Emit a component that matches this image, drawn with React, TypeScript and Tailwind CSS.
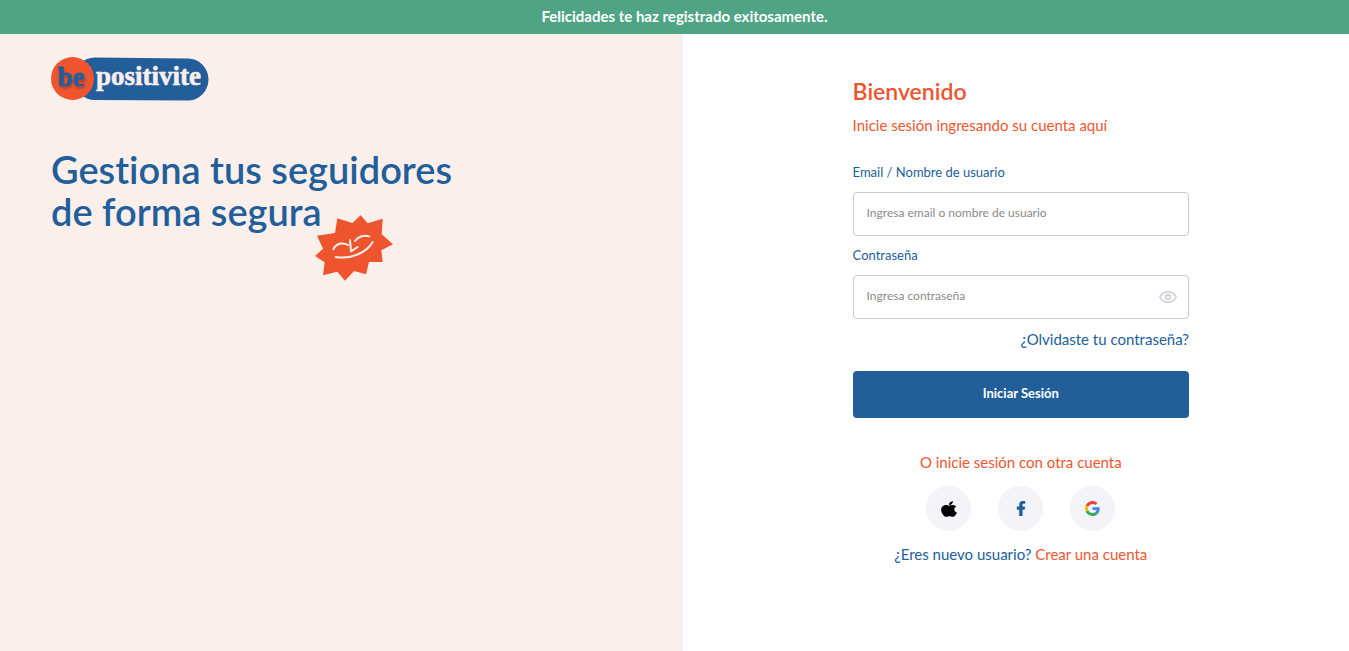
import { useState } from "react";
import type { ReactNode } from "react";

function Logo() {
  return (
    <svg className="block h-11 w-40" viewBox="0 0 160 44" role="img" aria-label="be positivite">
      <defs>
        <filter id="soft" x="-20%" y="-20%" width="150%" height="160%">
          <feDropShadow dx="0.5" dy="2" stdDeviation="1.2" floodColor="#7a2f2a" floodOpacity="0.6" />
        </filter>
      </defs>
      <path d="M44 0.5 L137 1.5 A20.5 21 0 0 1 137 43.5 L44 43 A21 21 0 0 1 44 0.5Z" fill="#215e9a" />
      <circle cx="21.5" cy="21.5" r="21.5" fill="#ee552f" />
      <text x="7" y="29" fontSize="27" fontWeight="700" fill="#215e9a" stroke="#215e9a" strokeWidth="0.8" filter="url(#soft)" className="font-['Liberation_Serif',serif]">be</text>
      <text x="45" y="28" fontSize="27" fontWeight="700" fill="#fbefeb" stroke="#fbefeb" strokeWidth="0.6" className="font-['Liberation_Serif',serif]">positivite</text>
    </svg>
  );
}

function Star() {
  return (
    <svg className="absolute top-[67px] left-[264px] h-[66px] w-[79px]" viewBox="31 29 237 198" aria-hidden="true">
      <path
        fill="#ee552f"
        d="M37 91 L91 83 L98 39 L143 53 L168 30 L189 54 L234 40 L231 87 L265 117 L230 135 L234 170 L193 170 L184 207 L148 197 L121 226 L98 199 L55 210 L60 171 L31 152 L55 130Z"
      />
      <g fill="none" stroke="#fbefeb" strokeWidth="6" strokeLinecap="round" strokeLinejoin="round">
        <path d="M86 132 C94 114 114 110 130 119" />
        <path d="M151 107 C161 93 180 88 194 93" />
        <path d="M136 105 L139 138 L159 125" />
        <path d="M93 155 C138 163 186 142 204 110" />
      </g>
    </svg>
  );
}

function AppleIcon() {
  return (
    <svg className="h-[18px] w-4" viewBox="0 0 384 512" preserveAspectRatio="none" aria-hidden="true">
      <path d="M318.7 268.7c-.2-36.7 16.4-64.4 50-84.8-18.8-26.9-47.2-41.7-84.7-44.6-35.5-2.8-74.3 20.7-88.5 20.7-15 0-49.4-19.7-76.4-19.7C63.3 141.2 4 184.8 4 273.5q0 39.3 14.4 81.2c12.8 36.7 59 126.7 107.2 125.2 25.2-.6 43-17.9 75.8-17.9 31.8 0 48.3 17.9 76.4 17.9 48.6-.7 90.4-82.5 102.6-119.3-65.2-30.7-61.7-90-61.7-91.9zm-56.6-164.2c27.3-32.4 24.8-61.9 24-72.5-24.1 1.4-52 16.4-67.9 34.9-17.5 19.8-27.8 44.3-25.6 71.9 26.1 2 49.9-11.4 69.5-34.3z" />
    </svg>
  );
}

function FacebookIcon() {
  return (
    <svg className="h-[15px] w-4" viewBox="0 0 320 512" fill="#215e9a" stroke="#215e9a" strokeWidth="14" aria-hidden="true">
      <path d="M279.14 288l14.22-92.66h-88.91v-60.13c0-25.35 12.42-50.06 52.24-50.06h40.42V6.26S260.43 0 225.36 0c-73.22 0-121.08 44.38-121.08 124.72v70.62H22.89V288h81.39v224h100.17V288z" />
    </svg>
  );
}

function GoogleIcon() {
  return (
    <svg className="h-[15px] w-[15px]" viewBox="0 0 48 48" aria-hidden="true">
      <path fill="#ea4335" d="M24 9.5c3.54 0 6.71 1.22 9.21 3.6l6.85-6.85C35.9 2.38 30.47 0 24 0 14.62 0 6.51 5.38 2.56 13.22l7.98 6.19C12.43 13.72 17.74 9.5 24 9.5z" />
      <path fill="#4285f4" d="M46.98 24.55c0-1.57-.15-3.09-.38-4.55H24v9.02h12.94c-.58 2.96-2.26 5.48-4.78 7.18l7.73 6c4.51-4.18 7.09-10.36 7.09-17.65z" />
      <path fill="#fbbc05" d="M10.53 28.59c-.48-1.45-.76-2.99-.76-4.59s.27-3.14.76-4.59l-7.98-6.19C.92 16.46 0 20.12 0 24c0 3.88.92 7.54 2.56 10.78l7.97-6.19z" />
      <path fill="#34a853" d="M24 48c6.48 0 11.93-2.13 15.89-5.81l-7.73-6c-2.15 1.45-4.92 2.3-8.16 2.3-6.26 0-11.57-4.22-13.47-9.91l-7.98 6.19C6.51 42.62 14.62 48 24 48z" />
    </svg>
  );
}

function SocialButton({ label, children }: { label: string; children: ReactNode }) {
  return (
    <button type="button" aria-label={label} className="flex size-[45px] items-center justify-center rounded-full bg-[#f3f3f8]">
      {children}
    </button>
  );
}

const inputClass =
  "mt-2 block h-11 w-full rounded border border-[#c8c8da] bg-white px-[13px] pb-1 text-xs text-[#215e9a] placeholder:text-[#8a8a8a] outline-none focus:border-[#215e9a]";

export default function App() {
  const [visible, setVisible] = useState(false);
  return (
    <div className="flex min-h-screen flex-col bg-white font-['Lato',sans-serif] text-[15px] leading-6 text-[#215e9a] [font-variant-ligatures:none]">
      <div role="status" className="bg-[#4ea484] pt-1 pb-1.5 pl-5 text-center font-bold text-white">
        Felicidades te haz registrado exitosamente.
      </div>
      <div className="flex flex-1">
        <section className="w-[50.6%] bg-[#fbefeb] px-[51px] pt-[23px]">
          <Logo />
          <div className="relative mt-[47px]">
            <h1 className="text-[38px] leading-[42px] font-semibold">
              Gestiona tus seguidores
              <br />
              de forma segura
            </h1>
            <Star />
          </div>
        </section>
        <main className="flex-1 pt-[41px] pr-40 pl-[170px]">
          <h2 className="text-[23px] leading-8 font-semibold text-[#ee552f]">Bienvenido</h2>
          <p className="mt-1.5 text-[#ee552f]">Inicie sesión ingresando su cuenta aquí</p>
          <form className="mt-[23px]" onSubmit={(e) => e.preventDefault()}>
            <label htmlFor="user" className="block text-[13px]">
              Email / Nombre de usuario
            </label>
            <input id="user" type="text" placeholder="Ingresa email o nombre de usuario" className={inputClass} />
            <label htmlFor="password" className="mt-[7px] block text-[13px]">
              Contraseña
            </label>
            <div className="relative">
              <input id="password" type={visible ? "text" : "password"} placeholder="Ingresa contraseña" className={inputClass} />
              <button
                type="button"
                aria-label="Mostrar contraseña"
                onClick={() => setVisible(!visible)}
                className="absolute inset-y-0 right-3 flex items-center"
              >
                <svg className="h-3 w-[18px]" viewBox="0 0 18 12" fill="none" stroke="#c8c8da" strokeWidth="1.4" aria-hidden="true">
                  <path d="M0.8 6 C3 2.4 5.8 0.8 9 0.8 S15 2.4 17.2 6 C15 9.6 12.2 11.2 9 11.2 S3 9.6 0.8 6Z" />
                  <circle cx="9" cy="6" r="2.3" />
                </svg>
              </button>
            </div>
            <a href="#recuperar" className="mt-2 block text-right">
              ¿Olvidaste tu contraseña?
            </a>
            <button type="submit" className="mt-5 block h-[47px] w-full rounded bg-[#215e9a] pb-1 text-[13px] font-bold text-white">
              Iniciar Sesión
            </button>
          </form>
          <p className="mt-8 text-center text-[#ee552f]">O inicie sesión con otra cuenta</p>
          <div className="mt-3 flex justify-center gap-[27px]">
            <SocialButton label="Apple"><AppleIcon /></SocialButton>
            <SocialButton label="Facebook"><FacebookIcon /></SocialButton>
            <SocialButton label="Google"><GoogleIcon /></SocialButton>
          </div>
          <p className="mt-[11px] text-center">
            ¿Eres nuevo usuario? <a href="#registro" className="text-[#ee552f]">Crear una cuenta</a>
          </p>
        </main>
      </div>
    </div>
  );
}
